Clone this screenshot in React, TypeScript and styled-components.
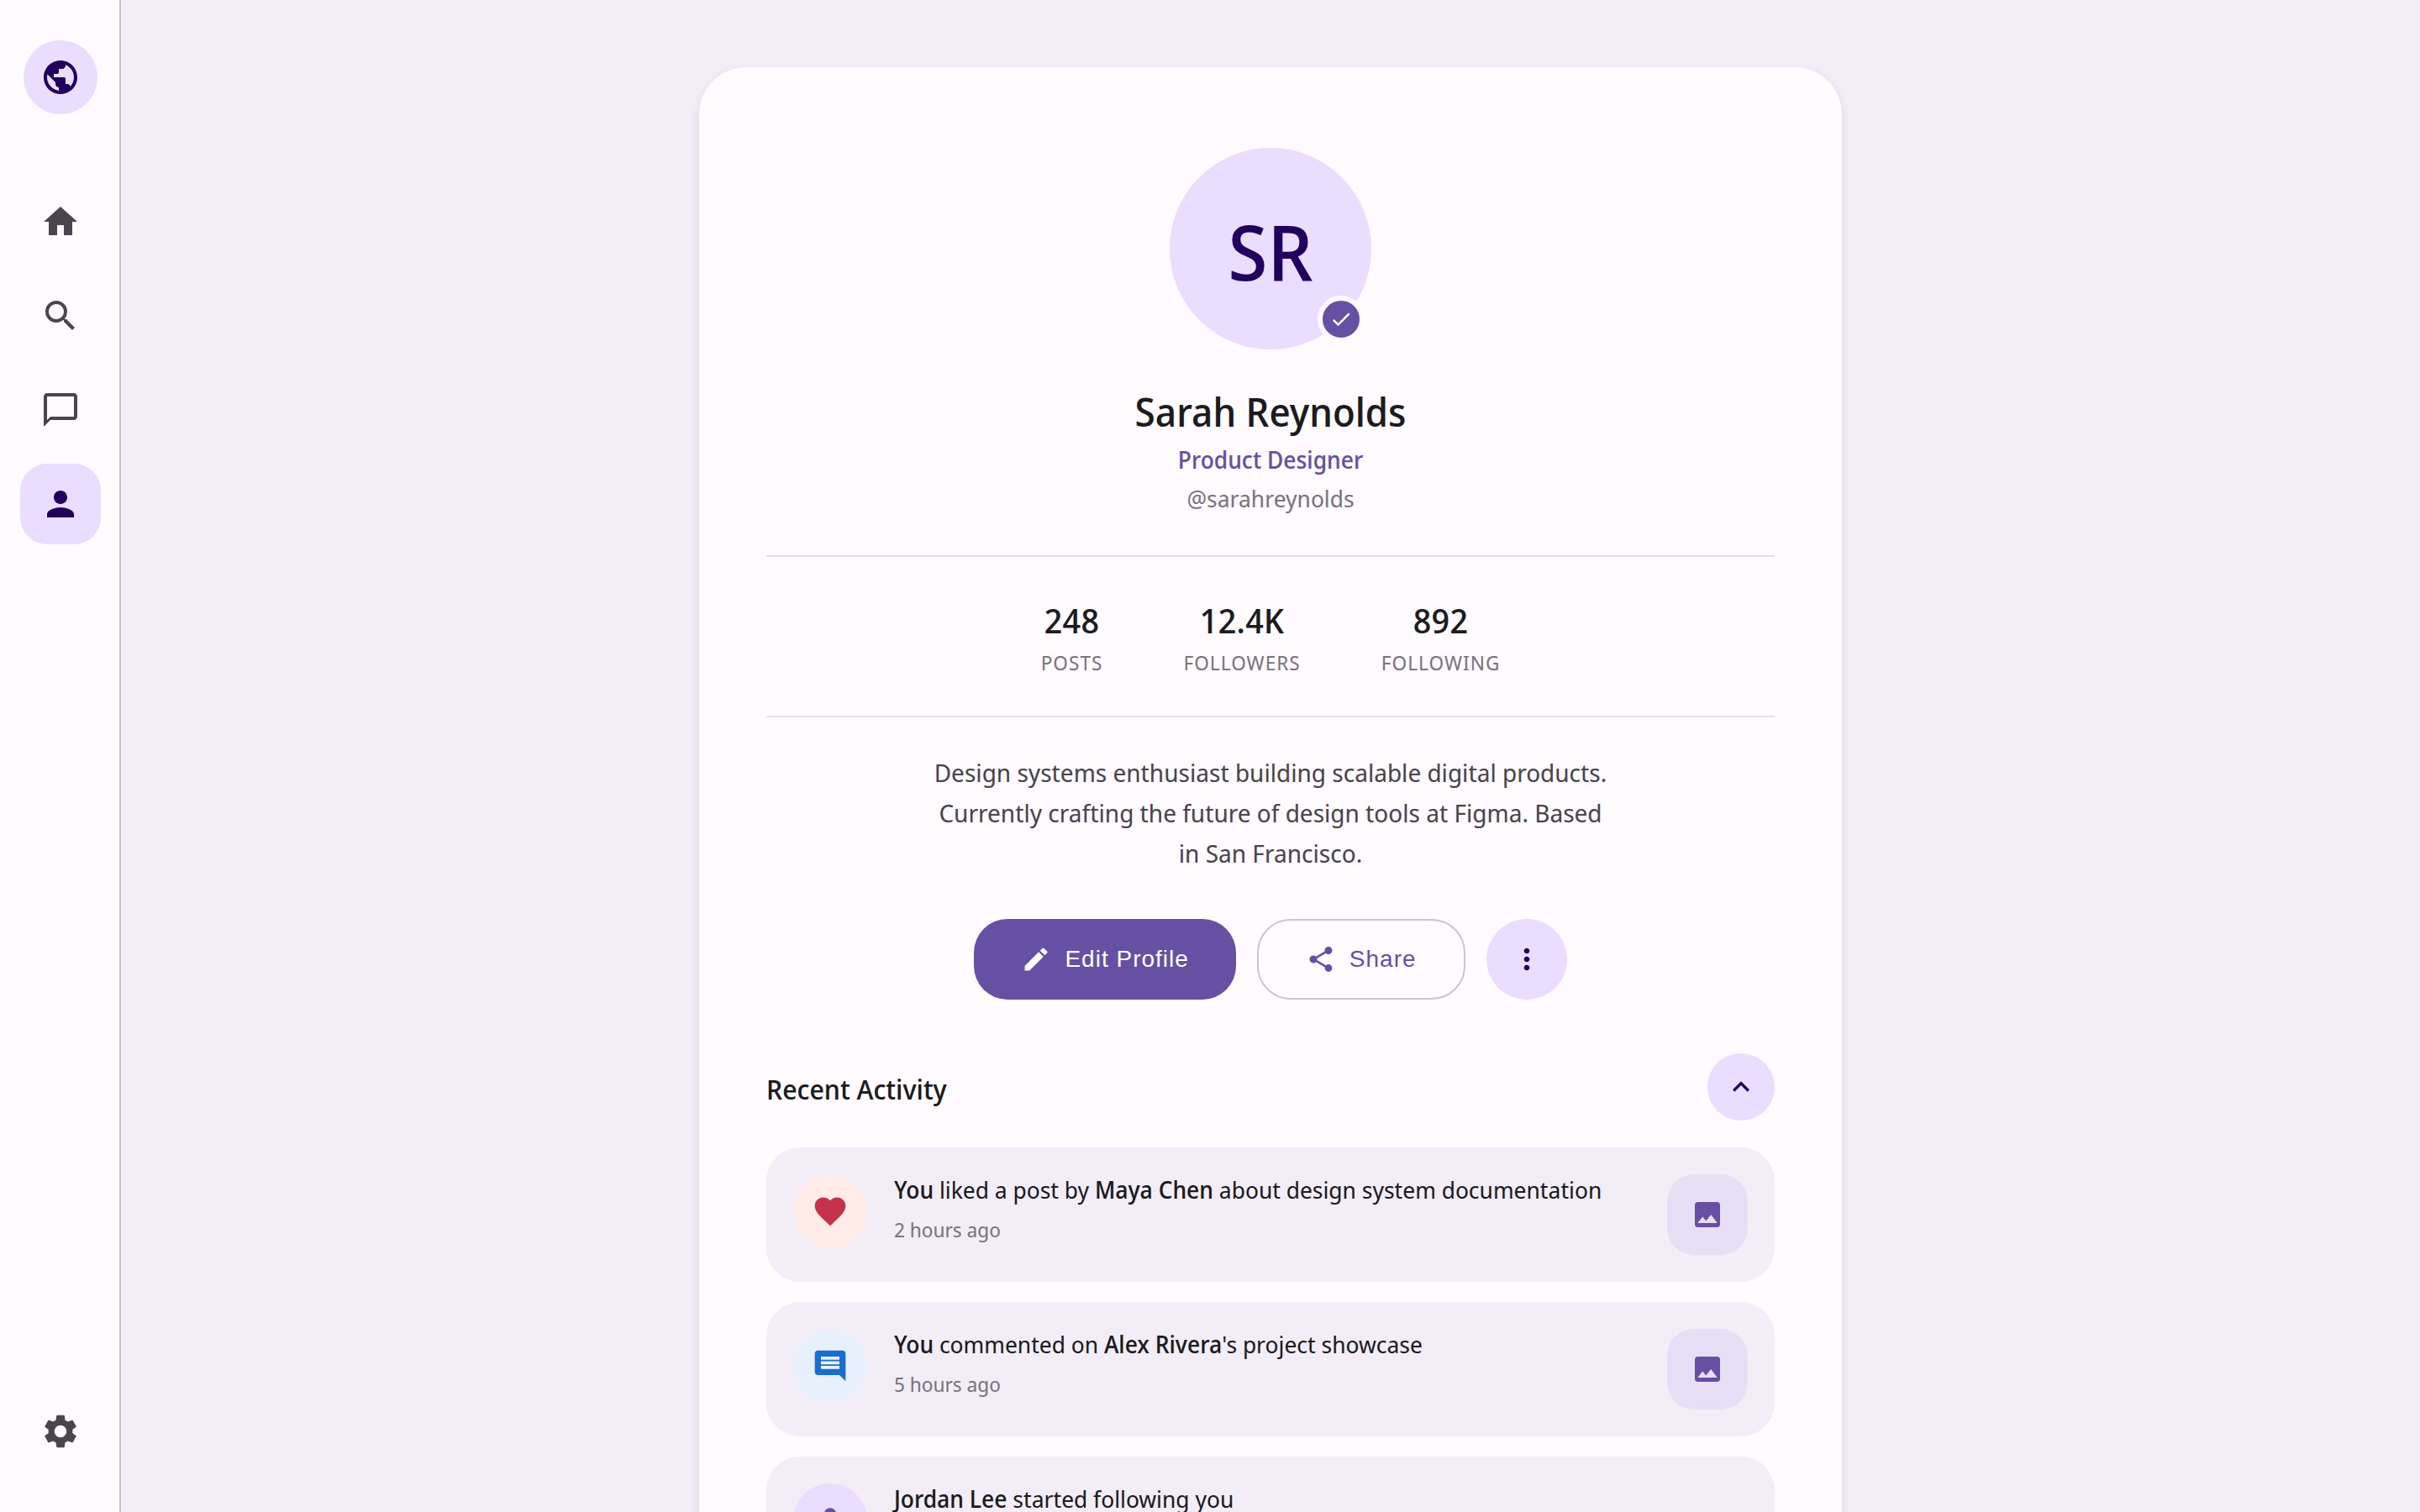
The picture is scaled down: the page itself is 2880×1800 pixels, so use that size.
import React from "react";
import styled, { createGlobalStyle } from "styled-components";
import {
  MdPublic, MdHome, MdSearch, MdChatBubbleOutline, MdPerson, MdSettings, MdCheck, MdEdit,
  MdShare, MdMoreVert, MdExpandLess, MdFavorite, MdComment, MdImage,
} from "react-icons/md";

const Global = createGlobalStyle`
  html, body { margin: 0; padding: 0; height: 100%; overflow: hidden; }
  body { font-family: "Noto Sans Display", "Noto Sans", sans-serif; background: #F3EDF7; color: #1C1B1F; }
  * { box-sizing: border-box; }
`;

const Shell = styled.div`
  display: flex;
  width: 2880px;
  height: 1800px;
  overflow: hidden;
`;

const Rail = styled.nav`
  width: 144px;
  flex: none;
  height: 100%;
  display: flex;
  flex-direction: column;
  align-items: center;
  padding: 48px 0 48px 2px;
  background: #FFFBFE;
  border-right: 2px solid #CAC4D0;
`;

const Logo = styled.div`
  width: 88px;
  height: 88px;
  flex: none;
  border-radius: 50%;
  background: #EADDFF;
  color: #21005D;
  display: flex;
  align-items: center;
  justify-content: center;
  margin-bottom: 80px;
`;

const RailList = styled.div`
  display: flex;
  flex-direction: column;
  gap: 16px;
  flex: 1;
`;

const RailItem = styled.div<{ $active?: boolean }>`
  width: 96px;
  height: 96px;
  border-radius: 32px;
  display: flex;
  align-items: center;
  justify-content: center;
  background: ${(p) => (p.$active ? "#EADDFF" : "transparent")};
  color: ${(p) => (p.$active ? "#21005D" : "#49454F")};
`;

const Main = styled.main`
  flex: 1;
  min-width: 0;
  display: flex;
  justify-content: center;
  padding-top: 80px;
`;

const Card = styled.section`
  width: 1360px;
  height: fit-content;
  background: #FFFBFE;
  border-radius: 56px;
  padding: 96px 80px 80px;
  box-shadow: 0 4px 12px rgba(0, 0, 0, 0.1);
  display: flex;
  flex-direction: column;
`;

const Head = styled.header`
  display: flex;
  flex-direction: column;
  align-items: center;
  padding-bottom: 48px;
  border-bottom: 2px solid #E7E0EC;
`;

const Avatar = styled.div`
  position: relative;
  width: 240px;
  height: 240px;
  border-radius: 50%;
  padding-top: 6px;
  background: #EADDFF;
  color: #21005D;
  display: flex;
  align-items: center;
  justify-content: center;
  font-size: 90px;
  font-weight: 500;
  line-height: 1;
  margin-bottom: 44px;
`;

const Badge = styled.span`
  position: absolute;
  right: 8px;
  bottom: 8px;
  width: 56px;
  height: 56px;
  border-radius: 50%;
  border: 6px solid #FFFBFE;
  background: #6750A4;
  color: #fff;
  display: flex;
  align-items: center;
  justify-content: center;
`;

const Name = styled.h1`
  margin: 0;
  font-size: 46.5px;
  font-weight: 500;
  line-height: 60px;
  color: #1C1B1F;
`;

const Role = styled.div`
  font-size: 28px;
  font-weight: 500;
  line-height: 40px;
  color: #6750A4;
  margin-top: 7px;
`;

const Handle = styled.div`
  font-size: 28px;
  line-height: 40px;
  color: #79747E;
  margin-top: 6px;
`;

const Stats = styled.div`
  display: flex;
  justify-content: center;
  gap: 96px;
  padding: 50px 0 47px;
  border-bottom: 2px solid #E7E0EC;
`;

const Stat = styled.div`
  display: flex;
  flex-direction: column;
  align-items: center;
`;

const StatValue = styled.div`
  font-size: 40px;
  font-weight: 500;
  line-height: 52px;
  letter-spacing: 0.3px;
  color: #1C1B1F;
`;

const StatLabel = styled.div`
  font-size: 24px;
  line-height: 32px;
  margin-top: 8px;
  color: #79747E;
  letter-spacing: 1px;
  text-transform: uppercase;
`;

const Bio = styled.p`
  margin: 42px auto 54px;
  width: 816px;
  font-size: 29.7px;
  line-height: 48px;
  text-align: center;
  color: #49454F;
`;

const Actions = styled.div`
  display: flex;
  justify-content: center;
  gap: 25px;
  margin-bottom: 64px;
`;

const Button = styled.button<{ $filled?: boolean }>`
  height: 96px;
  padding: 0 56px;
  border-radius: 40px;
  display: inline-flex;
  align-items: center;
  gap: 16px;
  font-family: "Liberation Sans", Arial, sans-serif;
  font-size: 28px;
  letter-spacing: 1px;
  border: ${(p) => (p.$filled ? "none" : "2px solid #CAC4D0")};
  background: ${(p) => (p.$filled ? "#6750A4" : "transparent")};
  color: ${(p) => (p.$filled ? "#FFFFFF" : "#6750A4")};
`;

const RoundButton = styled.button<{ $size: number }>`
  width: ${(p) => p.$size}px;
  height: ${(p) => p.$size}px;
  padding: 0;
  border: none;
  border-radius: 50%;
  background: #EADDFF;
  color: #21005D;
  display: flex;
  align-items: center;
  justify-content: center;
`;

const SectionHead = styled.div`
  display: flex;
  align-items: center;
  justify-content: space-between;
  margin-bottom: 32px;
`;

const SectionTitle = styled.h2`
  margin: 0;
  padding-top: 6px;
  font-size: 32px;
  font-weight: 500;
  line-height: 44px;
  color: #1C1B1F;
`;

const List = styled.div`
  display: flex;
  flex-direction: column;
  gap: 24px;
`;

const Row = styled.article`
  display: flex;
  align-items: flex-start;
  gap: 32px;
  padding: 32px;
  height: 160px;
  background: #F3EDF7;
  border-radius: 40px;
`;

const RowIcon = styled.div<{ $bg: string; $fg: string }>`
  width: 88px;
  height: 88px;
  flex: none;
  border-radius: 50%;
  background: ${(p) => p.$bg};
  color: ${(p) => p.$fg};
  display: flex;
  align-items: center;
  justify-content: center;
`;

const RowBody = styled.div`
  flex: 1;
  min-width: 0;
`;

const RowText = styled.div`
  font-size: 28px;
  line-height: 36px;
  color: #1C1B1F;
  b { font-weight: 500; }
`;

const RowTime = styled.div`
  font-size: 24px;
  line-height: 32px;
  margin-top: 14px;
  color: #79747E;
`;

const Thumb = styled.div`
  width: 96px;
  height: 96px;
  flex: none;
  border-radius: 32px;
  background: #E7DFF5;
  color: #6750A4;
  display: flex;
  align-items: center;
  justify-content: center;
`;

const stats = [
  { value: "248", label: "Posts" },
  { value: "12.4K", label: "Followers" },
  { value: "892", label: "Following" },
];

const rows = [
  {
    icon: <MdFavorite size={44} />, bg: "#FFECE9", fg: "#C4314B", time: "2 hours ago", thumb: true,
    text: <><b>You</b> liked a post by <b>Maya Chen</b> about design system documentation</>,
  },
  {
    icon: <MdComment size={44} />, bg: "#E8F0FE", fg: "#1A6DD0", time: "5 hours ago", thumb: true,
    text: <><b>You</b> commented on <b>Alex Rivera</b>'s project showcase</>,
  },
  {
    icon: <MdPerson size={44} />, bg: "#EADDFF", fg: "#6750A4", time: "1 day ago", thumb: false,
    text: <><b>Jordan Lee</b> started following you</>,
  },
];

export default function App() {
  return (
    <>
      <Global />
      <Shell>
        <Rail>
          <Logo><MdPublic size={48} /></Logo>
          <RailList>
            <RailItem><MdHome size={48} /></RailItem>
            <RailItem><MdSearch size={48} /></RailItem>
            <RailItem><MdChatBubbleOutline size={48} /></RailItem>
            <RailItem $active><MdPerson size={48} /></RailItem>
          </RailList>
          <RailItem><MdSettings size={48} /></RailItem>
        </Rail>
        <Main>
          <Card>
            <Head>
              <Avatar>
                SR
                <Badge><MdCheck size={28} /></Badge>
              </Avatar>
              <Name>Sarah Reynolds</Name>
              <Role>Product Designer</Role>
              <Handle>@sarahreynolds</Handle>
            </Head>
            <Stats>
              {stats.map((s) => (
                <Stat key={s.label}>
                  <StatValue>{s.value}</StatValue>
                  <StatLabel>{s.label}</StatLabel>
                </Stat>
              ))}
            </Stats>
            <Bio>
              Design systems enthusiast building scalable digital products. Currently crafting the
              future of design tools at Figma. Based in San Francisco.
            </Bio>
            <Actions>
              <Button $filled><MdEdit size={36} />Edit Profile</Button>
              <Button><MdShare size={36} />Share</Button>
              <RoundButton $size={96}><MdMoreVert size={40} /></RoundButton>
            </Actions>
            <SectionHead>
              <SectionTitle>Recent Activity</SectionTitle>
              <RoundButton $size={80}><MdExpandLess size={40} /></RoundButton>
            </SectionHead>
            <List>
              {rows.map((r) => (
                <Row key={r.time}>
                  <RowIcon $bg={r.bg} $fg={r.fg}>{r.icon}</RowIcon>
                  <RowBody>
                    <RowText>{r.text}</RowText>
                    <RowTime>{r.time}</RowTime>
                  </RowBody>
                  {r.thumb && <Thumb><MdImage size={40} /></Thumb>}
                </Row>
              ))}
            </List>
          </Card>
        </Main>
      </Shell>
    </>
  );
}
